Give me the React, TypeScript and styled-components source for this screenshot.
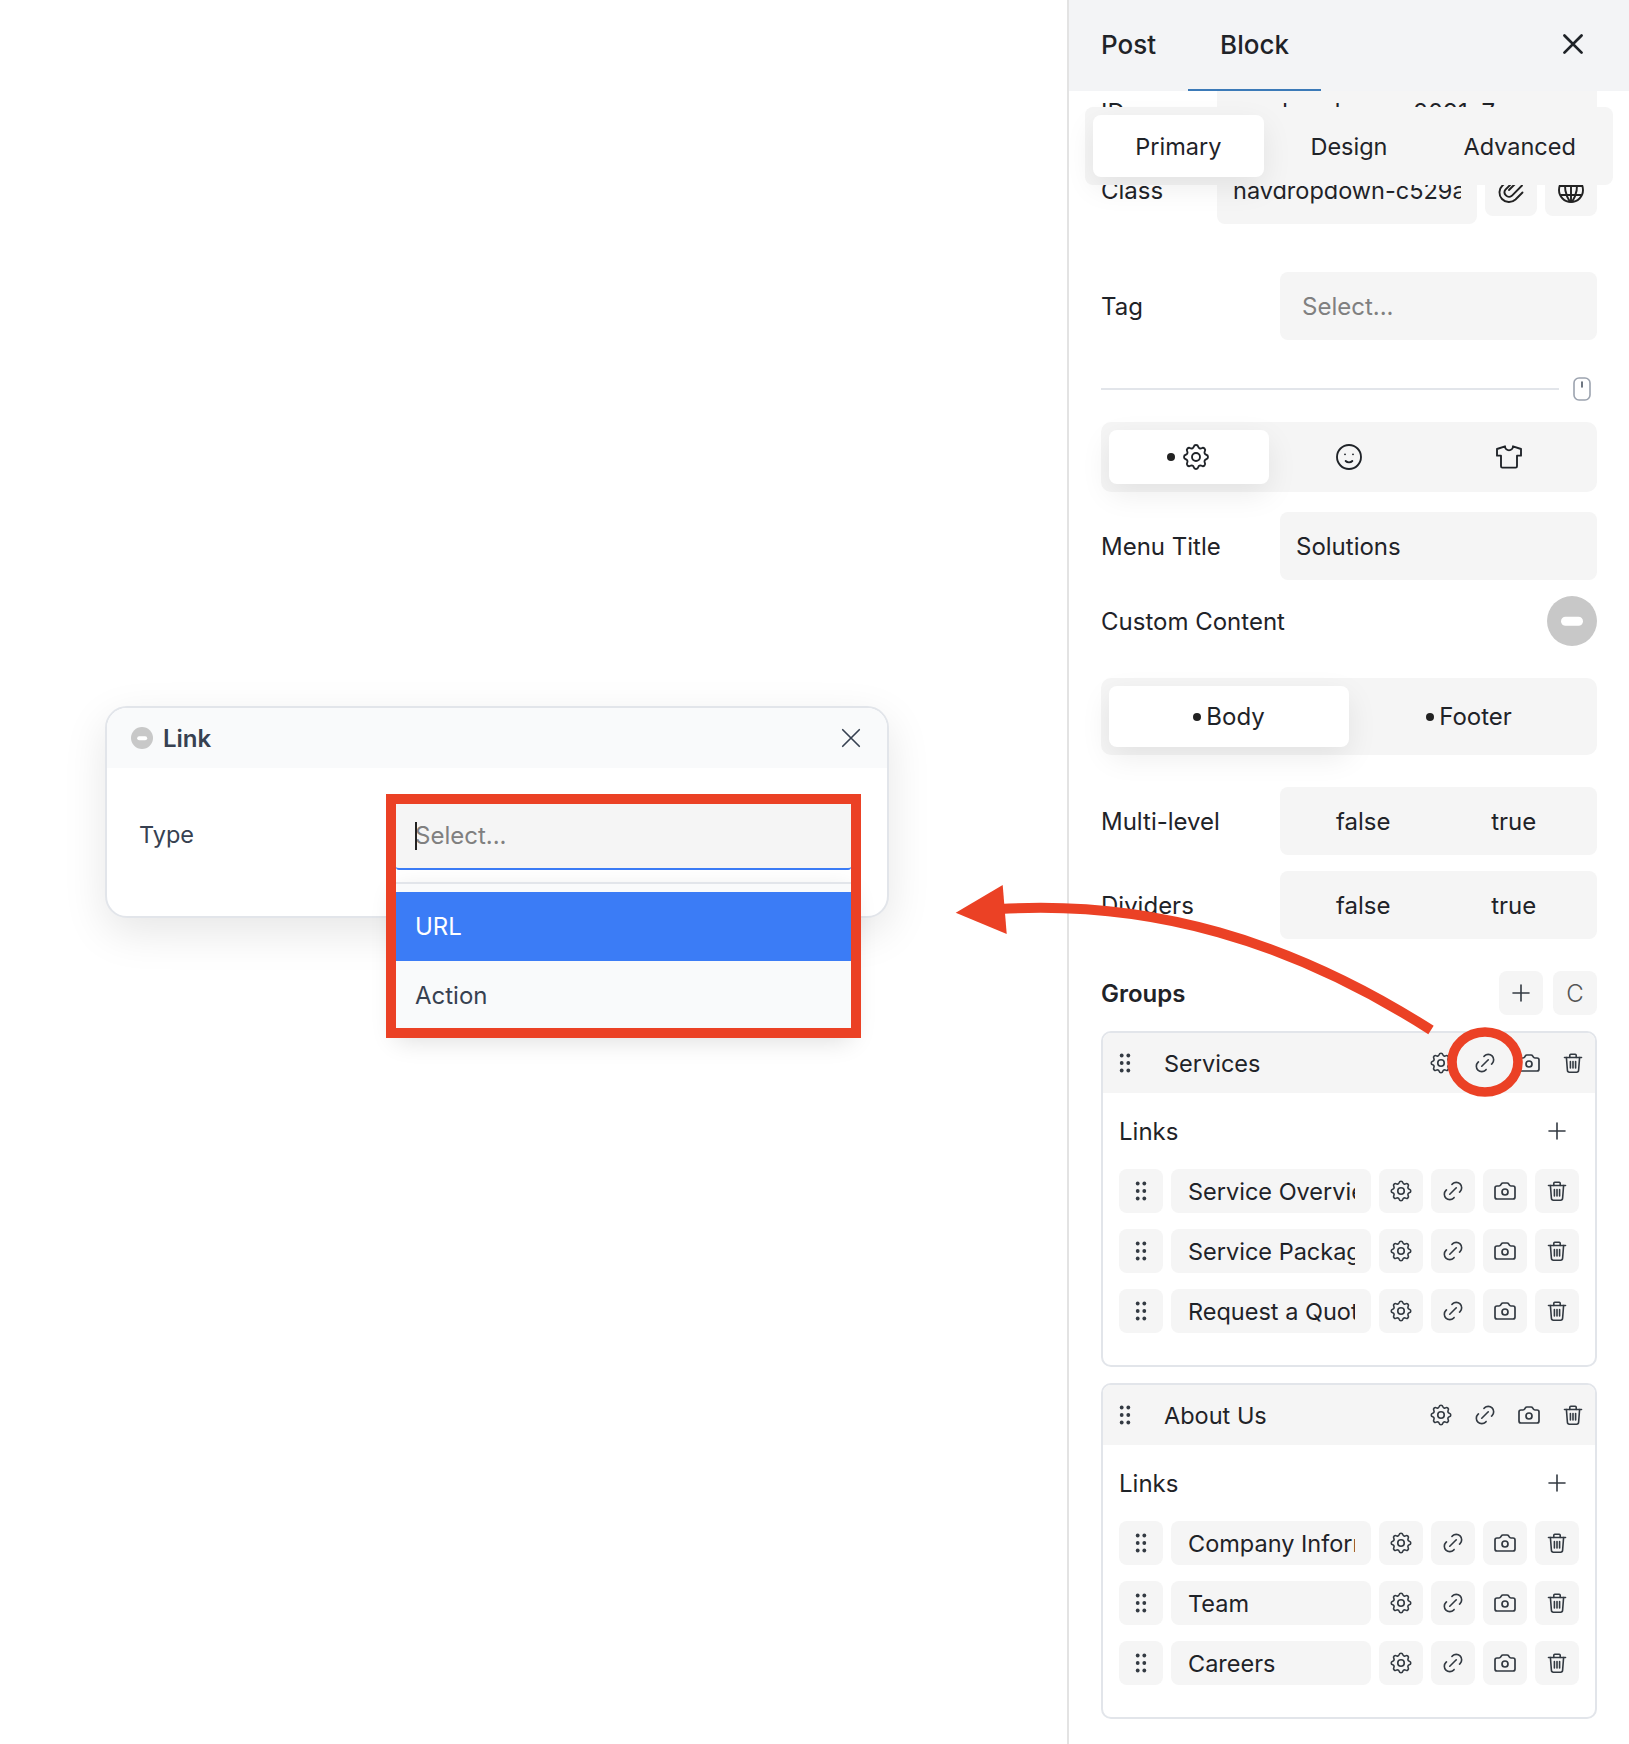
import React, { FunctionComponent } from 'react';

import styled, { createGlobalStyle } from 'styled-components';
import { Camera } from 'lucide-react';
import { TbLink, TbMoodSmile, TbSettings, TbShirt } from 'react-icons/tb';

const colors = {
  ink: '#1f2328',
  muted: '#374151',
  placeholder: '#808080',
  fill: '#f5f5f5',
  line: '#e2e5ea',
  header: '#f3f4f6',
  red: '#eb4125',
  blue: '#3b7cf6',
};

const softShadow = '0 10px 30px rgba(0, 0, 0, 0.08)';

const GlobalStyle = createGlobalStyle`
  html, body { margin: 0; padding: 0; background: #fff; }
  body {
    font-family: Inter, "Noto Sans", sans-serif;
    font-size: 24px;
    color: ${colors.ink};
  }
`;

const IconSvg: FunctionComponent<{ size?: number; children: React.ReactNode }> = ({ size = 24, children }) => (
  <svg
    width={size}
    height={size}
    viewBox="0 0 24 24"
    fill="none"
    stroke="currentColor"
    strokeWidth="1.6"
    strokeLinecap="round"
    strokeLinejoin="round"
  >
    {children}
  </svg>
);

const TrashIcon = () => (
  <IconSvg>
    <path d="M3.5 6.5h17" />
    <path d="M8.8 6.5V4.2a1 1 0 0 1 1-1h4.4a1 1 0 0 1 1 1v2.3" />
    <path d="M5.4 6.5l1 12.8a2 2 0 0 0 2 1.9h7.2a2 2 0 0 0 2-1.9l1-12.8" />
    <path d="M9.4 10.5v6.5M12 10.5v6.5M14.6 10.5v6.5" />
  </IconSvg>
);

const PlusIcon = () => (
  <IconSvg size={24}>
    <path d="M12 4v16M4 12h16" />
  </IconSvg>
);

const CloseIcon: FunctionComponent<{ weight: number }> = ({ weight }) => (
  <svg width="24" height="24" viewBox="0 0 24 24" fill="none" stroke="currentColor" strokeWidth={weight} strokeLinecap="round">
    <path d="M3 3l18 18M21 3L3 21" />
  </svg>
);

const GripIcon = () => (
  <svg width="12" height="20" viewBox="0 0 12 20" fill="currentColor">
    {[2.5, 10, 17.5].map((y) => (
      <g key={y}>
        <circle cx="2.7" cy={y} r="1.9" />
        <circle cx="9.3" cy={y} r="1.9" />
      </g>
    ))}
  </svg>
);

const ClipIcon = () => (
  <svg width="28" height="28" viewBox="0 0 28 28" fill="none" stroke="currentColor" strokeWidth="1.9" strokeLinecap="round">
    <path d="M8 7L5.5 9.5a9.5 9.5 0 0 0 13 14l7-7" />
    <path d="M19 3L8.5 13.5a4.5 4.5 0 0 0 6.3 6.3L25 9.5" />
    <path d="M22 4L12 14" />
  </svg>
);

const GlobeIcon = () => (
  <svg width="28" height="28" viewBox="0 0 28 28" fill="none" stroke="currentColor" strokeWidth="1.9">
    <circle cx="14" cy="14" r="12" />
    <path d="M2 10h24M3.5 19h21M14 2v24M9 3c-2 7-1 15 4 23M19 3c2 7 1 15-4 23" />
  </svg>
);

const MouseIcon = () => (
  <svg width="18" height="24" viewBox="0 0 18 24" fill="none" stroke="#9ca3af" strokeWidth="1.6">
    <rect x="1" y="1" width="16" height="22" rx="5" />
    <path d="M9 5v5" stroke="#4b5563" strokeLinecap="round" />
  </svg>
);

const links = {
  services: ['Service Overview', 'Service Packages', 'Request a Quote'],
  about: ['Company Information', 'Team', 'Careers'],
};

const GroupCard: FunctionComponent<{ title: string; items: string[] }> = ({ title, items }) => (
  <Card>
    <CardHeader>
      <GripSlot>
        <GripIcon />
      </GripSlot>
      <CardTitle>{title}</CardTitle>
      <HeaderIcon>
        <TbSettings size={26} strokeWidth={1.5} />
      </HeaderIcon>
      <HeaderIcon>
        <TbLink size={26} strokeWidth={1.5} />
      </HeaderIcon>
      <HeaderIcon>
        <Camera size={24} strokeWidth={1.7} />
      </HeaderIcon>
      <HeaderIcon>
        <TrashIcon />
      </HeaderIcon>
    </CardHeader>
    <CardBody>
      <LinksRow>
        <span>Links</span>
        <GhostButton>
          <PlusIcon />
        </GhostButton>
      </LinksRow>
      {items.map((item) => (
        <ItemRow key={item}>
          <SquareButton>
            <GripIcon />
          </SquareButton>
          <ItemInput>
            <ItemText>{item}</ItemText>
          </ItemInput>
          <SquareButton>
            <TbSettings size={26} strokeWidth={1.5} />
          </SquareButton>
          <SquareButton>
            <TbLink size={26} strokeWidth={1.5} />
          </SquareButton>
          <SquareButton>
            <Camera size={24} strokeWidth={1.7} />
          </SquareButton>
          <SquareButton>
            <TrashIcon />
          </SquareButton>
        </ItemRow>
      ))}
    </CardBody>
  </Card>
);

const App: FunctionComponent = () => (
  <Page>
    <GlobalStyle />
    <Canvas>
      <Dialog>
        <DialogHeader>
          <MinusToggle $size={22} />
          <DialogTitle>Link</DialogTitle>
          <DialogClose>
            <CloseIcon weight={1.8} />
          </DialogClose>
        </DialogHeader>
        <DialogBody>
          <DialogLabel>Type</DialogLabel>
          <SelectWrap>
            <SelectInput>
              <Caret />
              <Placeholder>Select...</Placeholder>
            </SelectInput>
            <Menu>
              <MenuOption $active>URL</MenuOption>
              <MenuOption>Action</MenuOption>
            </Menu>
            <Highlight />
          </SelectWrap>
        </DialogBody>
      </Dialog>
    </Canvas>

    <Panel>
      <PanelHeader>
        <PanelTab>Post</PanelTab>
        <PanelTab $active>Block</PanelTab>
        <PanelClose>
          <CloseIcon weight={2.9} />
        </PanelClose>
      </PanelHeader>

      <SectionTabs>
        <SectionTab $active>Primary</SectionTab>
        <SectionTab>Design</SectionTab>
        <SectionTab>Advanced</SectionTab>
      </SectionTabs>

      <PanelBody>
        <IdRow>
          <ShortLabel>ID</ShortLabel>
          <Field>navdropdown-e2091c7</Field>
        </IdRow>
        <Row $top={10}>
          <ShortLabel>Class</ShortLabel>
          <ClassField>
            <ItemText>navdropdown-c529a3f</ItemText>
          </ClassField>
          <ClassButton>
            <ClipIcon />
          </ClassButton>
          <ClassButton>
            <GlobeIcon />
          </ClassButton>
        </Row>

        <Row $top={48}>
          <Label>Tag</Label>
          <Field $indent={22} $muted>
            Select...
          </Field>
        </Row>

        <SliderRow>
          <SliderLine />
          <MouseIcon />
        </SliderRow>

        <Segment $height={70} $top={21}>
          <SegmentItem $active>
            <Dot />
            <TbSettings size={32} strokeWidth={1.4} />
          </SegmentItem>
          <SegmentItem>
            <TbMoodSmile size={32} strokeWidth={1.4} />
          </SegmentItem>
          <SegmentItem>
            <TbShirt size={32} strokeWidth={1.4} />
          </SegmentItem>
        </Segment>

        <Row $top={20}>
          <Label>Menu Title</Label>
          <Field>Solutions</Field>
        </Row>

        <ToggleRow>
          <span>Custom Content</span>
          <MinusToggle $size={50} />
        </ToggleRow>

        <Segment $height={77} $top={32}>
          <SegmentItem $active>
            <Dot />
            Body
          </SegmentItem>
          <SegmentItem>
            <Dot />
            Footer
          </SegmentItem>
        </Segment>

        <Row $top={32}>
          <Label>Multi-level</Label>
          <BoolField>
            <span>false</span>
            <span>true</span>
          </BoolField>
        </Row>
        <Row $top={16}>
          <Label>Dividers</Label>
          <BoolField>
            <span>false</span>
            <span>true</span>
          </BoolField>
        </Row>

        <GroupsRow>
          <GroupsTitle>Groups</GroupsTitle>
          <SquareButton>
            <PlusIcon />
          </SquareButton>
          <CopyButton>C</CopyButton>
        </GroupsRow>

        <GroupCard title="Services" items={links.services} />
        <GroupCard title="About Us" items={links.about} />
      </PanelBody>
    </Panel>

    <Annotation viewBox="0 0 1629 1744">
      <path d="M1000 909 C1150 900 1290 940 1431 1030" fill="none" stroke={colors.red} strokeWidth="10" />
      <polygon points="955.7,912.7 1002.7,885 1006.7,934" fill={colors.red} />
      <ellipse cx="1485" cy="1062" rx="33" ry="30" fill="none" stroke={colors.red} strokeWidth="9.6" />
    </Annotation>
  </Page>
);

export default App;

const Page = styled.div`
  position: relative;
  display: flex;
  width: 1629px;
  height: 1744px;
  overflow: hidden;
`;

const Canvas = styled.main`
  position: relative;
  flex: 1;
`;

const Dialog = styled.section`
  position: absolute;
  left: 105px;
  top: 706px;
  width: 784px;
  height: 212px;
  box-sizing: border-box;
  border: 2px solid ${colors.line};
  border-radius: 22px;
  background: #fff;
  box-shadow: 0 14px 44px rgba(0, 0, 0, 0.1);
  color: ${colors.muted};
`;

const DialogHeader = styled.header`
  display: flex;
  align-items: center;
  height: 60px;
  padding: 0 24px;
  background: #f9fafb;
  border-radius: 20px 20px 0 0;
`;

const DialogTitle = styled.span`
  margin-left: 10px;
  font-weight: 600;
`;

const DialogClose = styled.span`
  display: flex;
  margin-left: auto;
  margin-right: 0;
  transform: scale(0.92);
`;

const DialogBody = styled.div`
  display: flex;
  padding: 36px 36px 0 32px;
`;

const DialogLabel = styled.span`
  width: 257px;
  height: 66px;
  line-height: 62px;
  font-size: 23.5px;
`;

const SelectWrap = styled.div`
  position: relative;
  flex: 1;
`;

const SelectInput = styled.div`
  position: relative;
  display: flex;
  align-items: center;
  height: 66px;
  padding: 0 0 2px 19px;
  box-sizing: border-box;
  background: ${colors.fill};
  border-bottom: 2px solid ${colors.blue};
  border-radius: 0 0 3px 3px;
`;

const Caret = styled.span`
  position: absolute;
  left: 19px;
  top: 18px;
  width: 1.5px;
  height: 28px;
  background: #222;
`;

const Placeholder = styled.span`
  color: ${colors.placeholder};
`;

const Menu = styled.div`
  position: absolute;
  top: 78px;
  left: 0;
  right: 0;
  padding-top: 8px;
  background: #f9fafb;
  border-top: 2px solid ${colors.line};
  box-shadow: 0 10px 24px rgba(0, 0, 0, 0.14);
`;

const MenuOption = styled.div<{ $active?: boolean }>`
  display: flex;
  align-items: center;
  height: 69px;
  padding-left: 19px;
  background: ${(p) => (p.$active ? colors.blue : 'transparent')};
  color: ${(p) => (p.$active ? '#fff' : colors.muted)};
`;

const Highlight = styled.div`
  position: absolute;
  top: -10px;
  left: -10px;
  right: -10px;
  height: 244px;
  box-sizing: border-box;
  border: 10px solid ${colors.red};
  pointer-events: none;
`;

const Panel = styled.aside`
  position: relative;
  display: flex;
  flex-direction: column;
  width: 562px;
  box-sizing: border-box;
  border-left: 2px solid #e3e3e3;
`;

const PanelHeader = styled.header`
  position: relative;
  z-index: 2;
  display: flex;
  flex: none;
  height: 91px;
  background: ${colors.header};
`;

const PanelTab = styled.div<{ $active?: boolean }>`
  display: flex;
  align-items: center;
  padding: 0 32px;
  font-size: 26px;
  font-weight: 500;
  border-bottom: 2.5px solid ${(p) => (p.$active ? '#3b7ab8' : 'transparent')};
  box-sizing: border-box;
`;

const PanelClose = styled.span`
  display: flex;
  align-items: center;
  margin-left: auto;
  margin-right: 44px;
  padding-bottom: 4px;
  transform: scale(0.95);
`;

const SectionTabs = styled.nav`
  position: absolute;
  z-index: 1;
  top: 107px;
  left: 16px;
  right: 16px;
  display: grid;
  grid-template-columns: repeat(3, 1fr);
  padding: 8px;
  height: 78px;
  box-sizing: border-box;
  background: ${colors.fill};
  border-radius: 8px;
  font-size: 23.5px;
`;

const SectionTab = styled.div<{ $active?: boolean }>`
  display: flex;
  align-items: center;
  justify-content: center;
  border-radius: 8px;
  background: ${(p) => (p.$active ? '#fff' : 'transparent')};
  box-shadow: ${(p) => (p.$active ? softShadow : 'none')};
`;

const PanelBody = styled.div`
  flex: 1;
  min-height: 0;
  overflow: hidden;
  padding: 0 32px;
`;

const Row = styled.div<{ $top?: number }>`
  display: flex;
  align-items: center;
  margin-top: ${(p) => p.$top ?? 0}px;
`;

const IdRow = styled(Row)`
  margin-top: -13px;
`;

const Label = styled.label`
  flex: none;
  width: 179px;
`;

const ShortLabel = styled(Label)`
  width: 116px;
`;

const Field = styled.div<{ $indent?: number; $muted?: boolean }>`
  flex: 1;
  display: flex;
  align-items: center;
  height: 68px;
  padding-left: ${(p) => p.$indent ?? 16}px;
  background: ${colors.fill};
  border-radius: 8px;
  color: ${(p) => (p.$muted ? colors.placeholder : colors.ink)};
`;

const ClassField = styled(Field)`
  flex: none;
  width: 260px;
  box-sizing: border-box;
  padding-right: 16px;
`;

const ClassButton = styled.button`
  display: flex;
  align-items: center;
  justify-content: center;
  align-self: flex-start;
  flex: none;
  width: 52px;
  height: 60px;
  margin-left: 8px;
  padding: 8px 0 0;
  border: 0;
  border-radius: 8px;
  background: ${colors.fill};
  color: #222;
`;

const SliderRow = styled(Row)`
  margin-top: 37px;
  padding-right: 6px;
  gap: 14px;
`;

const SliderLine = styled.div`
  flex: 1;
  height: 2px;
  background: ${colors.line};
`;

const Segment = styled.div<{ $height: number; $top: number }>`
  display: grid;
  grid-auto-flow: column;
  grid-auto-columns: 1fr;
  height: ${(p) => p.$height}px;
  margin-top: ${(p) => p.$top}px;
  padding: 8px;
  box-sizing: border-box;
  background: ${colors.fill};
  border-radius: 10px;
`;

const SegmentItem = styled.div<{ $active?: boolean }>`
  display: flex;
  align-items: center;
  justify-content: center;
  border-radius: 8px;
  background: ${(p) => (p.$active ? '#fff' : 'transparent')};
  box-shadow: ${(p) => (p.$active ? softShadow : 'none')};
`;

const Dot = styled.span`
  width: 8px;
  height: 8px;
  margin-right: 5px;
  border-radius: 50%;
  background: #222;
`;

const ToggleRow = styled(Row)`
  justify-content: space-between;
  margin-top: 16px;
`;

const MinusToggle = styled.span<{ $size: number }>`
  position: relative;
  flex: none;
  width: ${(p) => p.$size}px;
  height: ${(p) => p.$size}px;
  border-radius: 50%;
  background: #c8c8c8;

  &::after {
    content: '';
    position: absolute;
    left: 50%;
    top: 50%;
    width: 44%;
    height: 17%;
    border-radius: 99px;
    background: #fff;
    transform: translate(-50%, -50%);
  }
`;

const BoolField = styled(Field)`
  display: grid;
  grid-template-columns: 1fr 1fr;
  justify-items: center;
  padding: 0 8px;
`;

const GroupsRow = styled(Row)`
  gap: 10px;
  margin-top: 32px;
  margin-bottom: 16px;
`;

const GroupsTitle = styled.span`
  flex: 1;
  font-weight: 600;
`;

const SquareButton = styled.div`
  display: flex;
  align-items: center;
  justify-content: center;
  flex: none;
  width: 44px;
  height: 44px;
  border-radius: 8px;
  background: ${colors.fill};
  color: #333a42;
`;

const CopyButton = styled(SquareButton)`
  color: #555;
  font-weight: 300;
`;

const Card = styled.article`
  box-sizing: border-box;
  height: 336px;
  margin-bottom: 16px;
  border: 2px solid ${colors.line};
  border-radius: 10px;
`;

const CardHeader = styled.header`
  display: flex;
  align-items: center;
  height: 60px;
  background: ${colors.fill};
  border-radius: 8px 8px 0 0;
`;

const GripSlot = styled.span`
  display: flex;
  align-items: center;
  justify-content: center;
  flex: none;
  width: 44px;
  color: #333a42;
`;

const CardTitle = styled.span`
  flex: 1;
  padding-left: 17px;
  font-size: 23.5px;
`;

const HeaderIcon = styled.span`
  display: flex;
  align-items: center;
  justify-content: center;
  flex: none;
  width: 44px;
  color: #333a42;
`;

const CardBody = styled.div`
  padding: 16px 16px 0;
`;

const LinksRow = styled.div`
  display: flex;
  align-items: center;
  justify-content: space-between;
  height: 44px;
  margin-bottom: 16px;
`;

const GhostButton = styled.span`
  display: flex;
  align-items: center;
  justify-content: center;
  width: 44px;
  height: 44px;
  color: #333a42;
`;

const ItemRow = styled.div`
  display: flex;
  gap: 8px;
  margin-bottom: 16px;
`;

const ItemInput = styled.div`
  display: flex;
  align-items: center;
  flex: 1;
  min-width: 0;
  padding: 0 16px 0 17px;
  border-radius: 8px;
  background: ${colors.fill};
`;

const ItemText = styled.span`
  overflow: hidden;
  white-space: nowrap;
  font-size: 23.5px;
`;

const Annotation = styled.svg`
  position: absolute;
  z-index: 5;
  inset: 0;
  width: 1629px;
  height: 1744px;
  pointer-events: none;
`;
